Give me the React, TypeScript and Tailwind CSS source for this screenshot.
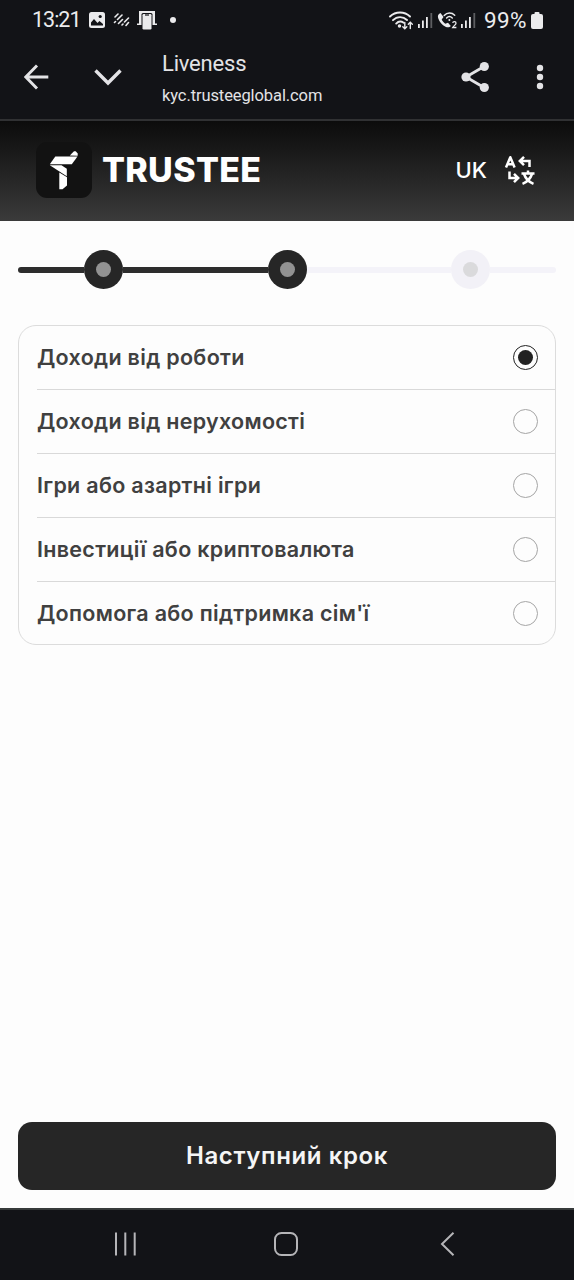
import { useState } from 'react';
import { twMerge } from 'tailwind-merge';

const INCOME_SOURCES = [
    'Доходи від роботи',
    'Доходи від нерухомості',
    'Ігри або азартні ігри',
    'Інвестиції або криптовалюта',
    "Допомога або підтримка сім'ї",
];

function SignalBars() {
    return (
        <svg width="15" height="16" viewBox="0 0 15 16" fill="#ebebed">
            <rect x="0" y="12" width="1.8" height="4" />
            <rect x="4" y="8.5" width="1.8" height="7.5" />
            <rect x="8" y="5" width="1.8" height="11" />
            <rect x="12.4" y="1" width="1.8" height="15" fill="#5d5e61" />
        </svg>
    );
}

function StatusBar() {
    return (
        <div className="flex h-10 shrink-0 items-center justify-between pl-8 pr-[31px] text-[#ebebed]">
            <div className="flex items-center">
                <span className="w-[57px] font-['Roboto',sans-serif] text-[21.5px] leading-10 tracking-[-1px]">13:21</span>
                <svg width="16" height="16" viewBox="0 0 16 16">
                    <rect width="16" height="16" rx="2.5" fill="#ebebed" />
                    <path d="M2 13.5v-3L5 7l3.5 4 2-2 3.5 3v1.5z" fill="#121317" />
                    <circle cx="11.2" cy="4.5" r="1.6" fill="#121317" />
                </svg>
                <svg width="17" height="15" viewBox="0 0 17 15" className="ml-2" fill="none" stroke="#ebebed" strokeWidth="1.6" strokeLinecap="round">
                    <path d="M2 4l3-3M1.5 9.5l1-1M4.500 6.5l4.500-4.500M5.500 10.500l4-4M9 12l1-1M11.500 9l4-4M13 12.500l2.500-3" />
                </svg>
                <svg width="20" height="20" viewBox="0 0 20 20" className="ml-[7px]">
                    <path d="M2 1h16v12.500h2V15h-5v-2h1.500V3.500h-13V13H5v2H0v-1.500h2z" fill="#ebebed" />
                    <path d="M3 3h14v10H3z" fill="#ebebed" />
                    <rect x="4.500" y="3" width="11" height="17" rx="1.500" fill="#121317" />
                    <rect x="5.500" y="4" width="9" height="15.500" rx="1.200" fill="#ebebed" />
                    <path d="M8 5h4" stroke="#121317" strokeWidth="1.200" />
                </svg>
                <span className="ml-[13px] h-1.5 w-1.5 rounded-full bg-[#ebebed]" />
            </div>
            <div className="flex items-center">
                <svg width="25" height="19" viewBox="0 0 25 19" fill="none" stroke="#ebebed" strokeWidth="1.9" strokeLinecap="round">
                    <path d="M1 5.500C6.500.2 15.500.2 21 5.500M4 9.200c4-4 10-4 14-.2M7.200 12.600c2-2.200 5-2.500 7.500-.8" />
                    <circle cx="10.500" cy="15" r=".8" fill="#ebebed" />
                    <path d="M15.800 11.500v6M13.800 15.700l2 2 2-2M21.300 17.500v-6M19.300 13.300l2-2 2 2" strokeWidth="1.4" />
                </svg>
                <div className="ml-1"><SignalBars /></div>
                <svg width="21" height="18" viewBox="0 0 21 18" className="ml-1" fill="none" stroke="#ebebed">
                    <path d="M3.500 2C1 3 .4 5 1.300 7.500c1.200 3.700 3.700 6.500 7.200 8.200 2.100 1 4.200.8 5.300-.6l-2.800-3.400-2.700 1c-1.700-1-2.800-2.500-3.600-4.200L6.500 6z" fill="#ebebed" stroke="none" />
                    <path d="M7.200 4.400c3-3.200 7.500-3.200 10.500-.2M9.600 7c1.700-1.700 4-1.700 5.700 0" strokeWidth="1.5" strokeLinecap="round" />
                    <circle cx="12.400" cy="9" r="1" fill="#ebebed" stroke="none" />
                    <path d="M15.700 11.800c.3-1.500 3.400-1.500 3.300.4 0 1.300-2 2.300-3.300 4.300h3.700" strokeWidth="1.3" />
                </svg>
                <div className="ml-[3px]"><SignalBars /></div>
                <span className="ml-2 w-[47px] whitespace-nowrap font-['Roboto',sans-serif] text-[22.5px] leading-10 tracking-[0.4px]">99%</span>
                <svg width="12" height="17" viewBox="0 0 12 17" fill="#ebebed">
                    <rect x="3.5" width="5" height="4" rx="1" />
                    <rect y="2" width="12" height="15" rx="2" />
                </svg>
            </div>
        </div>
    );
}

function BrowserBar() {
    return (
        <div className="flex h-[81px] shrink-0 border-b-2 border-[#303133] text-[#e3e3e6]">
            <svg width="26" height="26" viewBox="0 0 26 26" className="ml-6 mt-6" fill="none" stroke="currentColor" strokeWidth="2.9">
                <path d="M24.300 13H2M13 1.500L1.800 13 13 24.500" />
            </svg>
            <svg width="28" height="18" viewBox="0 0 28 18" className="ml-11 mt-[28px]" fill="none" stroke="currentColor" strokeWidth="3.4">
                <path d="M1.500 2.500L14 15 26.500 2.500" />
            </svg>
            <div className="ml-10 flex flex-1 flex-col font-['Roboto',sans-serif]">
                <span className="mt-[9px] text-[22px] leading-[30px] tracking-[-0.2px]">Liveness</span>
                <span className="mt-[5px] text-[16.5px] leading-6 tracking-[-0.1px]">kyc.trusteeglobal.com</span>
            </div>
            <svg width="30" height="32" viewBox="0 0 30 32" className="mr-[46px] mt-[21px]" fill="currentColor">
                <path d="M24 5.500L6 16l18 10.500" fill="none" stroke="currentColor" strokeWidth="2.800" />
                <circle cx="24.300" cy="5.500" r="4.600" />
                <circle cx="6" cy="16" r="4.600" />
                <circle cx="24.300" cy="26.500" r="4.600" />
            </svg>
            <svg width="8" height="26" viewBox="0 0 8 26" className="mr-[30px] mt-6" fill="currentColor">
                <circle cx="4" cy="4" r="3.200" />
                <circle cx="4" cy="13" r="3.200" />
                <circle cx="4" cy="22" r="3.200" />
            </svg>
        </div>
    );
}

function Header() {
    return (
        <header className="flex h-[100px] shrink-0 items-center bg-linear-to-b from-[#0c0c0c] to-[#3b3b3b] pb-0.5 pl-9 pr-[38px] text-white">
            <div className="flex h-14 w-14 items-center justify-center rounded-[11px] bg-[#121212]">
                <svg width="30" height="40" viewBox="0 0 30 40" fill="#fff">
                    <path d="M20.800 5.500L25 1.200h1.700l2 2.300v2.300z" />
                    <path d="M6.300 6.500h22.200l-5.700 7.700H.8z" />
                    <path d="M.8 15.200h11.700l5.300 3.600v7.400z" />
                    <path d="M10.300 22.600l7.700 4.700v8.300l-4.500 3.700h-3.200z" />
                </svg>
            </div>
            <span className="ml-2.5 font-['Inter',sans-serif] text-[34px] font-extrabold leading-10 tracking-[0.3px]">TRUSTEE</span>
            <span className="ml-auto font-['Inter',sans-serif] text-[22px] font-medium">UK</span>
            <svg width="32" height="32" viewBox="0 0 32 32" className="ml-[17px]" fill="none" stroke="#fff" strokeWidth="2.5">
                <path d="M2 13.500L6.300 3.200l4.300 10.300M3.500 10.300h5.600" strokeLinejoin="round" />
                <path d="M25.500 13V7H16.500M20 2.800L15.800 7l4.200 4.200" />
                <path d="M5.500 17.500V24H13M10 19.800l4.200 4.200-4.200 4.200" />
                <path d="M17.500 19.500h13M24 16.500v3M28 20c-1.500 4.500-5 8-9.500 9.800M20 20c1.500 4.500 5 8 9.500 9.800" />
            </svg>
        </header>
    );
}

function Step({ done }: { done: boolean }) {
    return (
        <div className={twMerge('flex h-[39px] w-[39px] shrink-0 items-center justify-center rounded-full', done ? 'bg-[#262626]' : 'bg-[#f2f1f7]')}>
            <div className={twMerge('h-[15px] w-[15px] rounded-full', done ? 'bg-[#929292]' : 'bg-[#dadadc]')} />
        </div>
    );
}

function Stepper() {
    return (
        <div className="mt-[29px] flex h-[39px] items-center">
            <div className="h-1.5 w-[66px] rounded-l-full bg-[#2d2d2d]" />
            <Step done />
            <div className="h-1.5 flex-1 bg-[#2d2d2d]" />
            <Step done />
            <div className="h-1.5 flex-1 bg-[#f4f3f9]" />
            <Step done={false} />
            <div className="h-1.5 w-[66px] rounded-r-full bg-[#f4f3f9]" />
        </div>
    );
}

export default function App() {
    const [selected, setSelected] = useState(0);

    return (
        <div className="flex h-[1280px] w-[574px] flex-col overflow-hidden bg-[#121317]">
            <StatusBar />
            <BrowserBar />
            <Header />

            <main className="flex flex-1 flex-col bg-[#fdfdfd] px-[18px] pb-[18px] font-['Inter',sans-serif]">
                <Stepper />

                <div className="mt-9 h-80 overflow-hidden rounded-[18px] border border-[#dcdcdc] pl-[18px]">
                    {INCOME_SOURCES.map((source, index) => {
                        const isSelected = index === selected;
                        const isLast = index === INCOME_SOURCES.length - 1;
                        return (
                            <button
                                key={source}
                                onClick={() => setSelected(index)}
                                className={twMerge(
                                    'flex h-16 w-full items-center justify-between border-b border-[#d9d9d9] pr-[17px] text-left',
                                    isLast && 'h-[62px] border-b-0'
                                )}
                            >
                                <span className="text-[21.5px] font-semibold tracking-[0.3px] text-[#404040]">{source}</span>
                                <span className={twMerge('flex h-[25px] w-[25px] items-center justify-center rounded-full border', isSelected ? 'border-[#222222]' : 'border-[#a5a5a5]')}>
                                    {isSelected && <span className="h-[15px] w-[15px] rounded-full bg-[#222222]" />}
                                </span>
                            </button>
                        );
                    })}
                </div>

                <button className="mt-auto h-[68px] rounded-[14px] bg-[#262626] text-[24px] font-semibold tracking-[0.6px] text-[#f5f5f5]">
                    Наступний крок
                </button>
            </main>

            {/* System navigation */}
            <nav className="flex h-[72px] shrink-0 items-center border-t-2 border-[#373a3b] pb-[3px] pl-[114px]">
                <svg width="23" height="24" viewBox="0 0 23 24" stroke="#b5b5b8" strokeWidth="2">
                    <path d="M2 .5v23M11.300 .5v23M20.700 .5v23" />
                </svg>
                <svg width="24" height="24" viewBox="0 0 24 24" className="ml-[137px]" fill="none" stroke="#b5b5b8" strokeWidth="2">
                    <rect x="1" y="1" width="22" height="22" rx="6.5" />
                </svg>
                <svg width="15" height="24" viewBox="0 0 15 24" className="ml-[142px]" fill="none" stroke="#b5b5b8" strokeWidth="2">
                    <path d="M13.500 .8L2 12l11.500 11.200" />
                </svg>
            </nav>
        </div>
    );
}
